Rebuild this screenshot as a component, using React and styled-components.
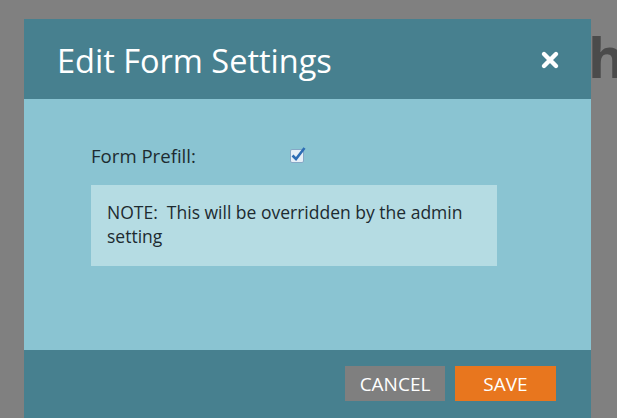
import React, { useState } from "react";
import styled, { createGlobalStyle } from "styled-components";

const GlobalStyle = createGlobalStyle`
  html, body {
    margin: 0;
    padding: 0;
    background: #808080;
    font-family: "Open Sans", "Liberation Sans", sans-serif;
  }
`;

const Page = styled.div`
  position: relative;
  width: 617px;
  height: 418px;
  overflow: hidden;
  background: #808080;
`;

const BackHeading = styled.h1`
  margin: 0;
  padding: 18px 0 0 436px;
  font-size: 56px;
  line-height: 76px;
  font-weight: 700;
  color: #4b4b4b;
  white-space: nowrap;
`;

const Modal = styled.div`
  position: absolute;
  left: 24px;
  top: 19px;
  width: 567px;
  display: flex;
  flex-direction: column;
`;

const Header = styled.div`
  height: 80px;
  box-sizing: border-box;
  background: #47808f;
  display: flex;
  align-items: center;
  justify-content: space-between;
  padding: 2px 31px 0 33px;
`;

const Title = styled.h2`
  margin: 0;
  font-size: 32.5px;
  font-weight: 400;
  color: #ffffff;
`;

const CloseButton = styled.button`
  border: none;
  background: none;
  padding: 0;
  cursor: pointer;
  display: flex;
`;

const Body = styled.div`
  height: 251px;
  background: #8ac4d2;
  padding: 44px 0 0 67px;
  box-sizing: border-box;
`;

const Row = styled.div`
  display: flex;
  align-items: center;
  height: 25px;
`;

const Label = styled.span`
  width: 197px;
  font-size: 18.6px;
  color: #1d2b30;
`;

const Check = styled.span`
  width: 18px;
  height: 18px;
  display: inline-flex;
  position: relative;
  top: -1px;
  cursor: pointer;
`;

const Note = styled.div`
  margin-top: 17px;
  width: 406px;
  height: 81px;
  box-sizing: border-box;
  background: #b5dce3;
  padding: 15px 16px;
  font-size: 17.5px;
  line-height: 24px;
  color: #1d2b30;
`;

const Footer = styled.div`
  height: 68px;
  background: #47808f;
  display: flex;
  justify-content: flex-end;
  align-items: flex-start;
  gap: 10px;
  padding: 16px 35px 0 0;
  box-sizing: border-box;
`;

const Button = styled.button`
  width: ${(p) => (p.$primary ? "101px" : "100px")};
  height: 35px;
  border: none;
  padding: 0;
  background: ${(p) => (p.$primary ? "#e8761e" : "#7f7f7f")};
  color: #ffffff;
  font-family: "Open Sans", "Liberation Sans", sans-serif;
  font-size: 19px;
  text-transform: uppercase;
  cursor: pointer;
`;

const CheckIcon = ({ checked }) => (
  <svg width="18" height="18" viewBox="0 0 18 18">
    <rect x="2.5" y="3.5" width="13" height="13" rx="1.5" fill="#e6eff7" stroke="#86a8c6" />
    {checked && (
      <path d="M4.5 9.5 L8 13 L16.5 2" fill="none" stroke="#2d6db5" strokeWidth="2.6" />
    )}
  </svg>
);

const CloseIcon = () => (
  <svg width="20" height="20" viewBox="0 0 20 20">
    <path d="M4 4 L16 16 M16 4 L4 16" stroke="#ffffff" strokeWidth="4.4" strokeLinecap="round" />
  </svg>
);

const App = () => {
  const [prefill, setPrefill] = useState(true);

  return (
    <Page>
      <GlobalStyle />
      <BackHeading>Search</BackHeading>
      <Modal>
        <Header>
          <Title>Edit Form Settings</Title>
          <CloseButton aria-label="Close">
            <CloseIcon />
          </CloseButton>
        </Header>
        <Body>
          <Row>
            <Label>Form Prefill:</Label>
            <Check onClick={() => setPrefill(!prefill)}>
              <CheckIcon checked={prefill} />
            </Check>
          </Row>
          <Note>NOTE:&nbsp; This will be overridden by the admin setting</Note>
        </Body>
        <Footer>
          <Button>Cancel</Button>
          <Button $primary>Save</Button>
        </Footer>
      </Modal>
    </Page>
  );
};

export default App;
